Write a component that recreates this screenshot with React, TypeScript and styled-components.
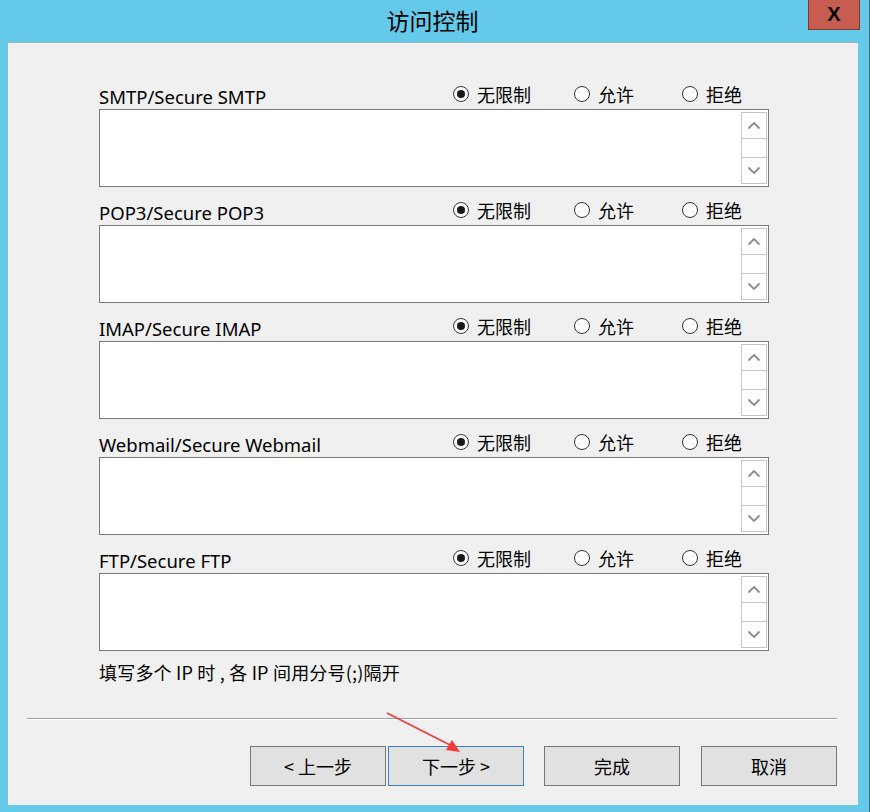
import styled, { createGlobalStyle } from "styled-components";

const GlobalStyle = createGlobalStyle`
  html, body {
    margin: 0;
    padding: 0;
    background: #65c9ea;
  }
  * {
    box-sizing: border-box;
  }
`;

const FONT = `"Noto Sans", "Noto Sans CJK SC", sans-serif`;

const Window = styled.div`
  position: relative;
  width: 870px;
  height: 812px;
  background: #65c9ea;
  display: flex;
  flex-direction: column;
  font-family: ${FONT};
  color: #000;
  border-right: 1px solid #3d6f82;
`;

const TitleBar = styled.div`
  height: 42px;
  display: grid;
  grid-template-columns: 1fr auto 1fr;
  align-items: start;
`;

const Title = styled.div`
  grid-column: 2;
  font-size: 23px;
  line-height: 40px;
  margin-left: -4px;
  font-family: "Noto Sans CJK SC", sans-serif;
`;

const CloseButton = styled.div`
  grid-column: 3;
  justify-self: end;
  margin-right: 9px;
  width: 52px;
  height: 30px;
  background: #c75c51;
  border: 1px solid #7c3a33;
  border-top: none;
  display: flex;
  align-items: center;
  justify-content: center;
  font-family: "Liberation Sans", sans-serif;
  font-weight: bold;
  font-size: 20px;
`;

const Content = styled.div`
  flex: 1;
  margin: 0 11px 7px 8px;
  background: #f0f0f0;
  border-top: 1px solid #9ab7c7;
  display: flex;
  flex-direction: column;
  padding: 41px 89px 0 91px;
`;

const Section = styled.div`
  display: flex;
  flex-direction: column;
  & + & {
    margin-top: 13px;
  }
`;

const HeaderRow = styled.div`
  height: 25px;
  display: grid;
  grid-template-columns: 354px 121px 108px auto;
  align-items: center;
  font-size: 18px;
`;

const Label = styled.span`
  white-space: nowrap;
  font-size: 18.5px;
  line-height: 25px;
`;

const RadioOption = styled.label`
  display: flex;
  align-items: center;
  gap: 8px;
  margin-top: -5px;
  white-space: nowrap;
  font-family: "Noto Sans CJK SC", sans-serif;
`;

const RadioCircle = styled.span<{ $checked?: boolean }>`
  width: 16px;
  height: 16px;
  border-radius: 50%;
  border: 1px solid #333;
  background: #fff;
  display: flex;
  align-items: center;
  justify-content: center;
  &::after {
    content: "";
    width: 8px;
    height: 8px;
    border-radius: 50%;
    background: ${(p) => (p.$checked ? "#1a1a1a" : "transparent")};
  }
`;

const TextBox = styled.div`
  height: 78px;
  background: #fff;
  border: 1px solid #7a7a7a;
  display: flex;
  justify-content: flex-end;
  padding: 2px 1px 2px 0;
`;

const ScrollBar = styled.div`
  width: 26px;
  border: 1px solid #c6c6c6;
  display: flex;
  flex-direction: column;
  background: #fff;
`;

const ScrollButton = styled.div`
  height: 25px;
  display: flex;
  align-items: center;
  justify-content: center;
`;

const ScrollTrack = styled.div`
  flex: 1;
  border-top: 1px solid #c6c6c6;
  border-bottom: 1px solid #c6c6c6;
`;

const Hint = styled.div`
  margin-top: 10px;
  font-size: 18px;
  line-height: 22px;
  letter-spacing: 0.2px;
  font-family: "Noto Sans CJK SC", sans-serif;
  white-space: pre;
`;

const Separator = styled.div`
  margin: 35px -68px 0 -72px;
  height: 2px;
  border-top: 1px solid #a0a0a0;
  border-bottom: 1px solid #ffffff;
`;

const ButtonRow = styled.div`
  display: flex;
  justify-content: flex-end;
  margin: 26px -68px 0 0;
`;

const DialogButton = styled.div<{ $focused?: boolean; $gap?: number }>`
  width: 136px;
  height: 40px;
  margin-left: ${(p) => p.$gap ?? 0}px;
  background: #e1e1e1;
  border: 1px solid ${(p) => (p.$focused ? "#3f7fbd" : "#777777")};
  display: flex;
  align-items: center;
  justify-content: center;
  font-size: 18px;
  font-family: "Noto Sans CJK SC", sans-serif;
  white-space: pre;
`;

const ArrowOverlay = styled.svg`
  position: absolute;
  left: 380px;
  top: 705px;
  pointer-events: none;
`;

const Chevron = ({ up }: { up?: boolean }) => (
  <svg width="14" height="9" viewBox="0 0 14 9">
    <path
      d={up ? "M1.5 7.5 L7 2 L12.5 7.5" : "M1.5 1.5 L7 7 L12.5 1.5"}
      fill="none"
      stroke="#8c8c8c"
      strokeWidth="1.8"
    />
  </svg>
);

const protocols = [
  "SMTP/Secure SMTP",
  "POP3/Secure POP3",
  "IMAP/Secure IMAP",
  "Webmail/Secure Webmail",
  "FTP/Secure FTP",
];

const options = ["无限制", "允许", "拒绝"];

export default function App() {
  return (
    <>
      <GlobalStyle />
      <Window>
        <TitleBar>
          <Title>访问控制</Title>
          <CloseButton>X</CloseButton>
        </TitleBar>
        <Content>
          {protocols.map((name) => (
            <Section key={name}>
              <HeaderRow>
                <Label>{name}</Label>
                {options.map((opt, i) => (
                  <RadioOption key={opt}>
                    <RadioCircle $checked={i === 0} />
                    {opt}
                  </RadioOption>
                ))}
              </HeaderRow>
              <TextBox>
                <ScrollBar>
                  <ScrollButton>
                    <Chevron up />
                  </ScrollButton>
                  <ScrollTrack />
                  <ScrollButton>
                    <Chevron />
                  </ScrollButton>
                </ScrollBar>
              </TextBox>
            </Section>
          ))}
          <Hint>填写多个 IP 时 , 各 IP 间用分号(;)隔开</Hint>
          <Separator />
          <ButtonRow>
            <DialogButton>{"< 上一步"}</DialogButton>
            <DialogButton $focused $gap={2}>
              {"下一步 >"}
            </DialogButton>
            <DialogButton $gap={20}>完成</DialogButton>
            <DialogButton $gap={21}>取消</DialogButton>
          </ButtonRow>
        </Content>
        <ArrowOverlay width="90" height="55" viewBox="0 0 90 55">
          <line x1="7" y1="8" x2="72" y2="41" stroke="#f23a3a" strokeWidth="1.6" />
          <polygon points="80,47 66,45 72,35" fill="#f23a3a" />
        </ArrowOverlay>
      </Window>
    </>
  );
}
